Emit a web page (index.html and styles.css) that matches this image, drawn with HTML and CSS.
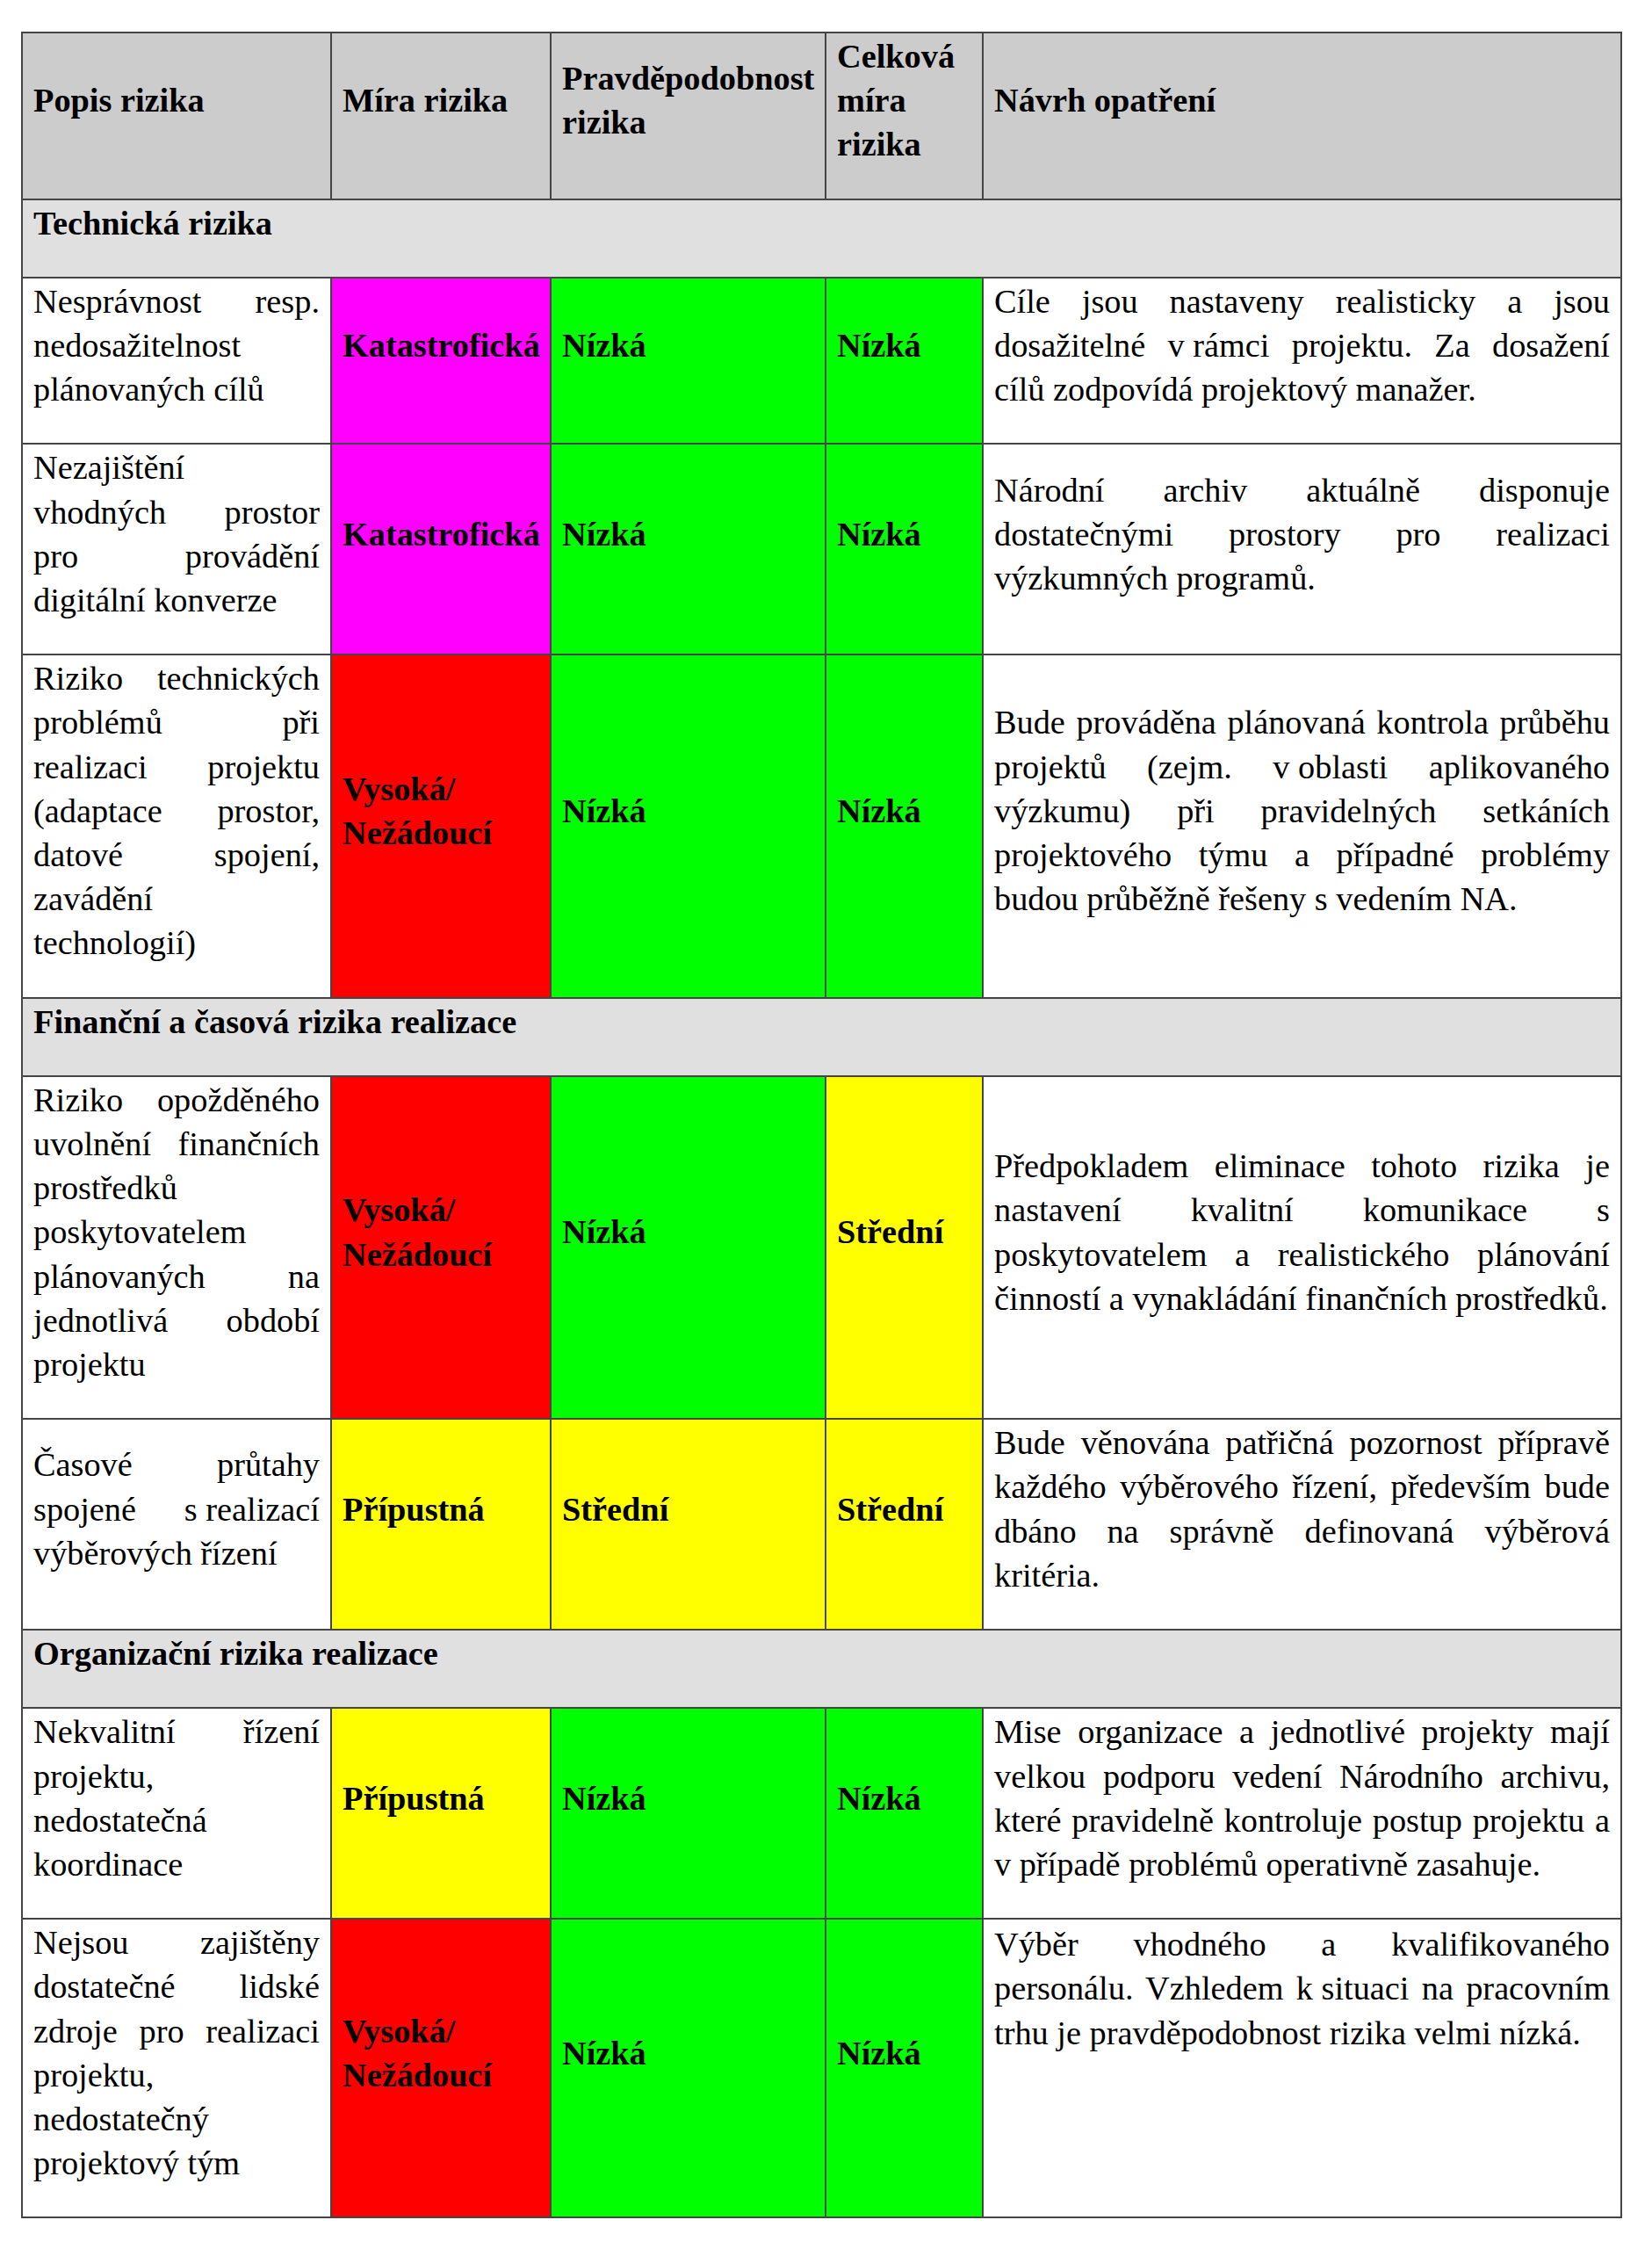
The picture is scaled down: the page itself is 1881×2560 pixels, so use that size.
FILE: index.html
```html
<!DOCTYPE html>
<html lang="cs">
<head>
<meta charset="utf-8">
<title>Rizika projektu</title>
<link rel="stylesheet" href="styles.css">
</head>
<body>
<table class="risk">
  <colgroup>
    <col class="c1"><col class="c2"><col class="c3"><col class="c4"><col class="c5">
  </colgroup>
  <thead>
    <tr class="head">
      <th>Popis rizika</th>
      <th>Míra rizika</th>
      <th>Pravděpodobnost rizika</th>
      <th>Celková míra rizika</th>
      <th>Návrh opatření</th>
    </tr>
  </thead>
  <tbody>
    <tr class="sec"><td colspan="5">Technická rizika</td></tr>
    <tr>
      <td class="desc">Nesprávnost resp. nedosažitelnost plánovaných cílů</td>
      <td class="lvl mag">Katastrofická</td>
      <td class="lvl grn">Nízká</td>
      <td class="lvl grn">Nízká</td>
      <td class="desc">Cíle jsou nastaveny realisticky a jsou dosažitelné <span class="nb">v rámci</span> projektu. Za dosažení cílů zodpovídá projektový manažer.</td>
    </tr>
    <tr>
      <td class="desc">Nezajištění vhodných prostor pro provádění digitální konverze</td>
      <td class="lvl mag">Katastrofická</td>
      <td class="lvl grn">Nízká</td>
      <td class="lvl grn">Nízká</td>
      <td class="desc">Národní archiv aktuálně disponuje dostatečnými prostory pro realizaci výzkumných programů.</td>
    </tr>
    <tr>
      <td class="desc">Riziko technických problémů při realizaci projektu (adaptace prostor, datové spojení, zavádění technologií)</td>
      <td class="lvl red">Vysoká/ Nežádoucí</td>
      <td class="lvl grn">Nízká</td>
      <td class="lvl grn">Nízká</td>
      <td class="desc">Bude prováděna plánovaná kontrola průběhu projektů (zejm. <span class="nb">v oblasti</span> aplikovaného výzkumu) při pravidelných setkáních projektového týmu a případné problémy budou průběžně řešeny <span class="nb">s vedením</span> NA.</td>
    </tr>
    <tr class="sec"><td colspan="5">Finanční a časová rizika realizace</td></tr>
    <tr>
      <td class="desc">Riziko opožděného uvolnění finančních prostředků poskytovatelem plánovaných na jednotlivá období projektu</td>
      <td class="lvl red">Vysoká/ Nežádoucí</td>
      <td class="lvl grn">Nízká</td>
      <td class="lvl yel">Střední</td>
      <td class="desc">Předpokladem eliminace tohoto rizika je nastavení kvalitní komunikace s poskytovatelem a realistického plánování činností a vynakládání finančních prostředků.</td>
    </tr>
    <tr>
      <td class="desc">Časové průtahy spojené <span class="nb">s realizací</span> výběrových řízení</td>
      <td class="lvl yel">Přípustná</td>
      <td class="lvl yel">Střední</td>
      <td class="lvl yel">Střední</td>
      <td class="desc">Bude věnována patřičná pozornost přípravě každého výběrového řízení, především bude dbáno na správně definovaná výběrová kritéria.</td>
    </tr>
    <tr class="sec"><td colspan="5">Organizační rizika realizace</td></tr>
    <tr>
      <td class="desc">Nekvalitní řízení projektu, nedostatečná koordinace</td>
      <td class="lvl yel">Přípustná</td>
      <td class="lvl grn">Nízká</td>
      <td class="lvl grn">Nízká</td>
      <td class="desc">Mise organizace a jednotlivé projekty mají velkou podporu vedení Národního archivu, které pravidelně kontroluje postup projektu a <span class="nb">v případě</span> problémů operativně zasahuje.</td>
    </tr>
    <tr>
      <td class="desc">Nejsou zajištěny dostatečné lidské zdroje pro realizaci projektu, nedostatečný projektový tým</td>
      <td class="lvl red">Vysoká/ Nežádoucí</td>
      <td class="lvl grn">Nízká</td>
      <td class="lvl grn">Nízká</td>
      <td class="desc top">Výběr vhodného a kvalifikovaného personálu. Vzhledem <span class="nb">k situaci</span> na pracovním trhu je pravděpodobnost rizika velmi nízká.</td>
    </tr>
  </tbody>
</table>
</body>
</html>
```

FILE: styles.css
```css
html, body {
  margin: 0;
  padding: 0;
  background: #ffffff;
}

body {
  padding: 36px 0 30px 24px;
  font-family: "Liberation Serif", "Times New Roman", serif;
  font-size: 38.3px;
  line-height: 50.2px;
  color: #000;
}

.risk {
  border-collapse: collapse;
  table-layout: fixed;
  width: 1821px;
  border: 2px solid #4a4a4a;
}

.c1 { width: 352px; }
.c2 { width: 250px; }
.c3 { width: 313px; }
.c4 { width: 179px; }
.c5 { width: 727px; }

.risk th,
.risk td {
  border: 2px solid #454545;
  padding: 1px 12px 36px 12px;
  vertical-align: middle;
  text-align: left;
}

.head th {
  background: #cccccc;
  font-weight: bold;
}

.sec td {
  background: #e0e0e0;
  font-weight: bold;
}

.risk td.desc {
  text-align: justify;
  background: #ffffff;
}

.risk td.top {
  vertical-align: top;
  padding-top: 3px;
}

.nb {
  display: inline-block;
  white-space: nowrap;
}

.lvl {
  font-weight: bold;
}

.mag { background: #ff00ff; }
.grn { background: #00ff00; }
.red { background: #ff0000; }
.yel { background: #ffff00; }
```
